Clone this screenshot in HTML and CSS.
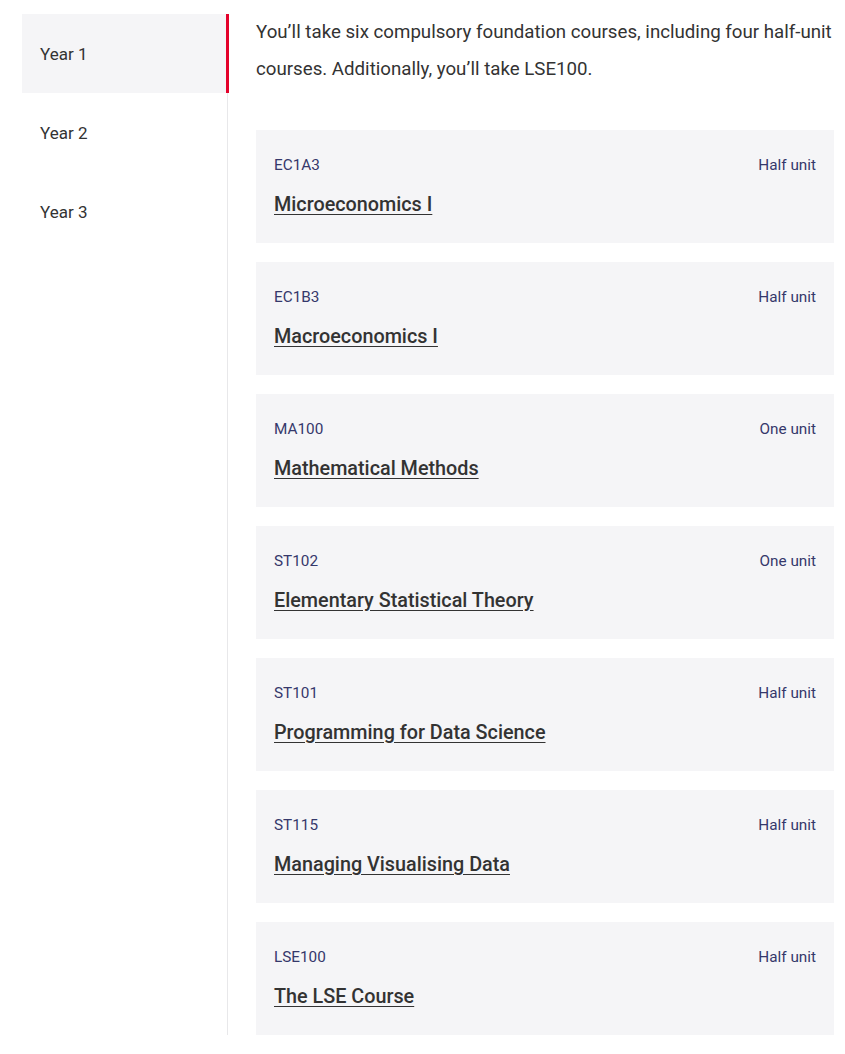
FILE: index.html
```html
<!DOCTYPE html>
<html lang="en">
  <head>
    <meta charset="UTF-8" />
    <meta name="viewport" content="width=device-width, initial-scale=1.0" />
    <title>Programme structure</title>
    <link rel="stylesheet" href="styles.css">
  </head>
  <body>
    <div class="layout">
      <nav class="tabs">
        <a href="#" class="tab active">Year 1</a>
        <a href="#" class="tab">Year 2</a>
        <a href="#" class="tab">Year 3</a>
      </nav>

      <main class="panel">
        <p class="intro">
          You’ll take six compulsory foundation courses, including four half-unit
          courses. Additionally, you’ll take LSE100.
        </p>

        <div class="course">
          <div class="course-meta"><span>EC1A3</span><span>Half unit</span></div>
          <a href="#" class="course-title">Microeconomics I</a>
        </div>
        <div class="course">
          <div class="course-meta"><span>EC1B3</span><span>Half unit</span></div>
          <a href="#" class="course-title">Macroeconomics I</a>
        </div>
        <div class="course">
          <div class="course-meta"><span>MA100</span><span>One unit</span></div>
          <a href="#" class="course-title">Mathematical Methods</a>
        </div>
        <div class="course">
          <div class="course-meta"><span>ST102</span><span>One unit</span></div>
          <a href="#" class="course-title">Elementary Statistical Theory</a>
        </div>
        <div class="course">
          <div class="course-meta"><span>ST101</span><span>Half unit</span></div>
          <a href="#" class="course-title">Programming for Data Science</a>
        </div>
        <div class="course">
          <div class="course-meta"><span>ST115</span><span>Half unit</span></div>
          <a href="#" class="course-title">Managing Visualising Data</a>
        </div>
        <div class="course">
          <div class="course-meta"><span>LSE100</span><span>Half unit</span></div>
          <a href="#" class="course-title">The LSE Course</a>
        </div>
      </main>
    </div>
  </body>
</html>
```

FILE: styles.css
```css
body {
  margin: 0;
  font-family: Roboto, "Liberation Sans", Arial, sans-serif;
  color: #333;
  background: #fff;
}
.layout {
  display: flex;
  align-items: stretch;
  padding: 14px 0 0 22px;
}
.tabs {
  display: flex;
  flex-direction: column;
  width: 205px;
  flex-shrink: 0;
  border-right: 1px solid #e8e8ea;
}
.tab {
  display: flex;
  align-items: center;
  height: 79px;
  padding-left: 18px;
  font-size: 17px;
  color: #333;
  text-decoration: none;
  margin-right: -2px;
  border-right: 3px solid transparent;
}
.tab.active {
  background-color: #f5f5f7;
  border-right-color: #e4022b;
}
.panel {
  width: 578px;
  margin-left: 28px;
}
.intro {
  margin: 0 0 42px;
  font-size: 18.7px;
  line-height: 37px;
  color: #333;
}
.course {
  background-color: #f5f5f7;
  padding: 25px 18px 25px;
  margin-bottom: 19px;
}
.course:last-child {
  margin-bottom: 0;
}
.course-meta {
  display: flex;
  justify-content: space-between;
  font-size: 15.3px;
  line-height: 20px;
  color: #35386b;
}
.course-title {
  display: inline-block;
  margin-top: 17px;
  font-size: 19.8px;
  line-height: 26px;
  font-weight: 500;
  color: #333;
  text-decoration: underline;
  text-underline-offset: 3px;
}
```
